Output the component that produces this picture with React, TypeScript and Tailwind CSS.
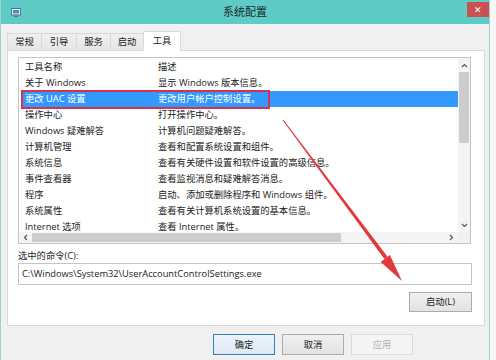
import React from "react";

const ROWS: [string, string][] = [
  ["关于 Windows", "显示 Windows 版本信息。"],
  ["更改 UAC 设置", "更改用户帐户控制设置。"],
  ["操作中心", "打开操作中心。"],
  ["Windows 疑难解答", "计算机问题疑难解答。"],
  ["计算机管理", "查看和配置系统设置和组件。"],
  ["系统信息", "查看有关硬件设置和软件设置的高级信息。"],
  ["事件查看器", "查看监视消息和疑难解答消息。"],
  ["程序", "启动、添加或删除程序和 Windows 组件。"],
  ["系统属性", "查看有关计算机系统设置的基本信息。"],
  ["Internet 选项", "查看 Internet 属性。"],
];

const TABS = [
  { label: "常规", w: "w-[35px]" },
  { label: "引导", w: "w-[36px]" },
  { label: "服务", w: "w-[35px]" },
  { label: "启动", w: "w-[34px]" },
];

function WinButton({ label, primary, disabled }: { label: string; primary?: boolean; disabled?: boolean }) {
  return (
    <div
      className={`w-[62px] h-[21px] flex items-center justify-center border text-[9.3px] ${
        primary
          ? "border-[#3c7fb1] bg-gradient-to-b from-[#eaf3fb] to-[#dde9f4] text-[#222]"
          : disabled
          ? "border-[#dcdcdc] bg-[#f4f4f4] text-[#b5b5b5]"
          : "border-[#acacac] bg-gradient-to-b from-[#f0f0f0] to-[#e3e3e3] text-[#222]"
      }`}
    >
      {label}
    </div>
  );
}

export default function App() {
  return (
    <div
      className="w-[496px] h-[360px] bg-[#f6f6f6] relative overflow-hidden text-[#222]"
      style={{ fontFamily: '"Open Sans", "Noto Sans CJK SC", sans-serif' }}
    >
      <div className="w-[490px] h-[360px] bg-[#f0f0f0] border-x border-[#9dd3d0] flex flex-col">
        {/* Title bar */}
        <div className="h-[24px] bg-[#5ecbc7] grid grid-cols-[1fr_auto_1fr] items-start flex-shrink-0">
          <div className="pt-[8px] pl-[10px]">
            <svg width="10" height="9" viewBox="0 0 10 9">
              <rect x="0.5" y="0.5" width="9" height="6.5" fill="#e8eef4" stroke="#5a6f86" />
              <rect x="2" y="2" width="6" height="3.5" fill="#3f8fd8" />
              <rect x="3" y="7.5" width="4" height="1.5" fill="#5a6f86" />
            </svg>
          </div>
          <div className="pt-[5px] text-[11px] leading-[14px] text-[#1c2b2b]">系统配置</div>
          <div className="flex justify-end">
            <div className="mt-[2px] w-[22px] h-[15px] bg-[#c9514f] flex items-center justify-center text-white text-[9px] leading-none">
              ✕
            </div>
          </div>
        </div>

        {/* Body */}
        <div className="flex-1 flex flex-col pl-[6px] pt-[7px]">
          {/* Tabs */}
          <div className="flex items-end h-[19px] relative z-10">
            {TABS.map((t) => (
              <div
                key={t.label}
                className={`${t.w} h-[17px] border border-b-0 border-[#d9d9d9] -ml-px first:ml-0 bg-gradient-to-b from-[#f0f0f0] to-[#e5e5e5] flex items-center justify-center text-[9.3px]`}
              >
                {t.label}
              </div>
            ))}
            <div className="w-[38px] h-[20px] -mb-px -ml-px border border-b-0 border-[#d9d9d9] bg-white flex items-center justify-center text-[9.3px] pb-[2px]">
              工具
            </div>
          </div>

          {/* Panel */}
          <div className="w-[478px] h-[276px] bg-white border border-[#d9d9d9] pl-[10px] pt-[6px] flex flex-col">
            {/* List */}
            <div className="w-[453px] h-[187px] border border-[#c4c4c4] flex flex-col relative">
              <div className="flex flex-1 min-h-0">
                <div className="flex-1 overflow-hidden pt-[1px] text-[9.3px]">
                  <div className="h-[16px] flex items-center pl-[6px]">
                    <span className="w-[133px]">工具名称</span>
                    <span>描述</span>
                  </div>
                  {ROWS.map(([name, desc], i) => (
                    <div
                      key={name}
                      className={`h-[16px] flex items-center ml-[3px] pl-[3px] whitespace-nowrap ${
                        i === 1 ? "bg-[#3399ff] text-white" : ""
                      }`}
                    >
                      <span className="w-[133px]">{name}</span>
                      <span>{desc}</span>
                    </div>
                  ))}
                </div>
                {/* Vertical scrollbar */}
                <div className="w-[12px] bg-[#f4f4f4] flex flex-col items-center">
                  <div className="h-[14px] flex items-center justify-center">
                    <svg width="7" height="5" viewBox="0 0 7 5">
                      <path d="M1 4 L3.5 1.5 L6 4" fill="none" stroke="#555" strokeWidth="1.2" />
                    </svg>
                  </div>
                  <div className="w-[10px] h-[71px] bg-[#cdcdcd]" />
                  <div className="flex-1" />
                  <div className="h-[14px] flex items-center justify-center">
                    <svg width="7" height="5" viewBox="0 0 7 5">
                      <path d="M1 1 L3.5 3.5 L6 1" fill="none" stroke="#555" strokeWidth="1.2" />
                    </svg>
                  </div>
                </div>
              </div>
              {/* Horizontal scrollbar */}
              <div className="h-[11px] flex flex-shrink-0">
                <div className="flex-1 bg-[#f4f4f4] flex items-center">
                  <div className="w-[13px] flex items-center justify-center">
                    <svg width="5" height="7" viewBox="0 0 5 7">
                      <path d="M4 1 L1.5 3.5 L4 6" fill="none" stroke="#555" strokeWidth="1.2" />
                    </svg>
                  </div>
                  <div className="w-[309px] h-[9px] bg-[#cdcdcd]" />
                  <div className="flex-1" />
                  <div className="w-[13px] flex items-center justify-center">
                    <svg width="5" height="7" viewBox="0 0 5 7">
                      <path d="M1 1 L3.5 3.5 L1 6" fill="none" stroke="#555" strokeWidth="1.2" />
                    </svg>
                  </div>
                </div>
                <div className="w-[12px] bg-[#f0f0f0]" />
              </div>
              {/* red highlight annotation */}
              <div className="absolute left-[2px] top-[32px] w-[249px] h-[19px] border-2 border-[#d3344c] pointer-events-none" />
            </div>

            <div className="mt-[6px] h-[12px] flex items-center text-[9.3px]">选中的命令(C):</div>
            <div className="mt-[1px] w-[454px] h-[22px] border border-[#c4c4c4] flex items-center pl-[3px] text-[9.3px]">
              C:\Windows\System32\UserAccountControlSettings.exe
            </div>
            <div className="mt-[7px] w-[454px] flex justify-end">
              <div className="w-[63px] h-[20px] border border-[#acacac] bg-gradient-to-b from-[#f0f0f0] to-[#e3e3e3] flex items-center justify-center text-[9.3px]">
                启动(L)
              </div>
            </div>
          </div>

          {/* Bottom buttons */}
          <div className="mt-[8px] pl-[206px] flex gap-[7px]">
            <WinButton label="确定" primary />
            <WinButton label="取消" />
            <WinButton label="应用" disabled />
          </div>
        </div>
      </div>

      {/* red arrow annotation */}
      <svg className="absolute inset-0 pointer-events-none" width="496" height="360" viewBox="0 0 496 360">
        <polygon points="283.4,119.7 282.6,120.3 384.4,259.1 387.6,256.8" fill="#e23a3a" />
        <polygon points="402,281 389.9,255.0 380.7,262.0" fill="#e23a3a" />
      </svg>
    </div>
  );
}
